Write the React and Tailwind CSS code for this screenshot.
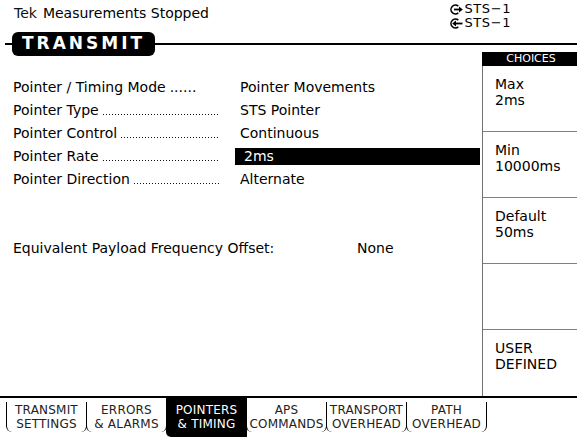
import React from 'react';

const ROWS = [
  { label: 'Pointer / Timing Mode', dots: 'big', value: 'Pointer Movements' },
  { label: 'Pointer Type', value: 'STS Pointer' },
  { label: 'Pointer Control', value: 'Continuous' },
  { label: 'Pointer Rate', value: '2ms', active: true },
  { label: 'Pointer Direction', value: 'Alternate' },
];

const CHOICES = [['Max', '2ms'], ['Min', '10000ms'], ['Default', '50ms'], [], ['USER', 'DEFINED']];

const TABS = [
  ['TRANSMIT', 'SETTINGS'],
  ['ERRORS', '& ALARMS'],
  ['POINTERS', '& TIMING'],
  ['APS', 'COMMANDS'],
  ['TRANSPORT', 'OVERHEAD'],
  ['PATH', 'OVERHEAD'],
];

const PortIcon = ({ dir }) => (
  <svg width="13" height="11" viewBox="0 0 13 11" className="mr-[1px]">
    <path d="M8.3 2.2 A4.4 4.4 0 1 0 8.3 8.8" fill="none" stroke="black" strokeWidth="1.6" />
    {dir === 'out' ? (
      <>
        <rect x="4" y="4.6" width="6" height="1.8" fill="black" />
        <polygon points="9,2.6 12.8,5.5 9,8.4" fill="black" />
      </>
    ) : (
      <>
        <rect x="5" y="4.6" width="7.5" height="1.8" fill="black" />
        <polygon points="6,2.6 2.2,5.5 6,8.4" fill="black" />
      </>
    )}
  </svg>
);

export default function App() {
  return (
    <div className="w-[577px] h-[437px] bg-white text-black flex flex-col overflow-hidden font-['DejaVu_Sans',sans-serif]">
      {/* header */}
      <div className="h-[32px] flex justify-between pr-[66px]">
        <div className="pl-[14px] pt-[5px] flex items-baseline text-[14px] leading-[16px]">
          <span className="mr-[6px] text-[#111]">Tek</span>
          <span>Measurements Stopped</span>
        </div>
        <div className="pt-[2px] text-[13px] leading-[14px] tracking-[0.6px]">
          <div className="flex items-center"><PortIcon dir="out" />STS−1</div>
          <div className="flex items-center"><PortIcon dir="in" />STS−1</div>
        </div>
      </div>
      <div className="h-[24px] flex items-center">
        <div className="ml-[5px] w-[7px] h-[2px] bg-black" />
        <div className="bg-black text-white rounded-[6px] px-[10px] h-[24px] flex items-center font-bold text-[17px] tracking-[3px]">
          TRANSMIT
        </div>
        <div className="flex-1 h-[2px] bg-black" />
      </div>

      {/* body */}
      <div className="flex-1 flex min-h-0">
        <div className="flex-1 pt-[20px] text-[14px]">
          {ROWS.map((r) => (
            <div key={r.label} className="h-[23px] flex items-center">
              <div className="w-[235px] pl-[13px] flex items-center whitespace-nowrap">
                <span>{r.label}</span>
                {r.dots === 'big' ? (
                  <span className="ml-[4px]">......</span>
                ) : (
                  <span className="ml-[4px] flex-1 mr-[15px] h-[1px] self-end mb-[6px] bg-[linear-gradient(to_right,#111_1px,transparent_1px)] bg-[length:3px_1px]" />
                )}
              </div>
              {r.active ? (
                <div className="flex-1 mr-[2px] h-[17px] bg-black text-white pl-[9px] flex items-center">{r.value}</div>
              ) : (
                <div className="flex-1 pl-[5px]">{r.value}</div>
              )}
            </div>
          ))}
          <div className="mt-[46px] flex items-center h-[23px] pl-[13px]">
            <span className="w-[344px]">Equivalent Payload Frequency Offset:</span>
            <span>None</span>
          </div>
        </div>

        {/* choices */}
        <div className="w-[95px] -mt-[4px] flex flex-col">
          <div className="h-[14px] bg-black text-white text-[11px] leading-[14px] text-center pl-[3px]">CHOICES</div>
          <div className="flex-1 border-l border-[#707070] flex flex-col">
            {CHOICES.map((c, i) => (
              <div
                key={i}
                className={`h-[66px] pl-[12px] pt-[10px] text-[14px] leading-[16px] ${i < 4 ? 'border-b border-[#808080]' : ''}`}
              >
                {c.map((t) => (
                  <div key={t}>{t}</div>
                ))}
              </div>
            ))}
          </div>
        </div>
      </div>

      {/* tab bar */}
      <div className="h-[41px] border-t-2 border-black flex pl-[6px] text-[12px] leading-[14px] tracking-[0.2px]">
        {TABS.map((t, i) =>
          t[0] === 'POINTERS' ? (
            <div key={i} className="w-[81px] -ml-px bg-black text-white rounded-bl-[5px] flex flex-col items-center pt-[5px]">
              <div>{t[0]}</div>
              <div>{t[1]}</div>
            </div>
          ) : (
            <div
              key={i}
              className={`w-[81px] h-[30px] mt-[4px] border-x border-b-0 border-black rounded-b-[6px] flex flex-col items-center text-[#222] pt-[1px] ${i === 0 ? '' : '-ml-px'}`}
            >
              <div>{t[0]}</div>
              <div>{t[1]}</div>
            </div>
          )
        )}
      </div>
    </div>
  );
}
